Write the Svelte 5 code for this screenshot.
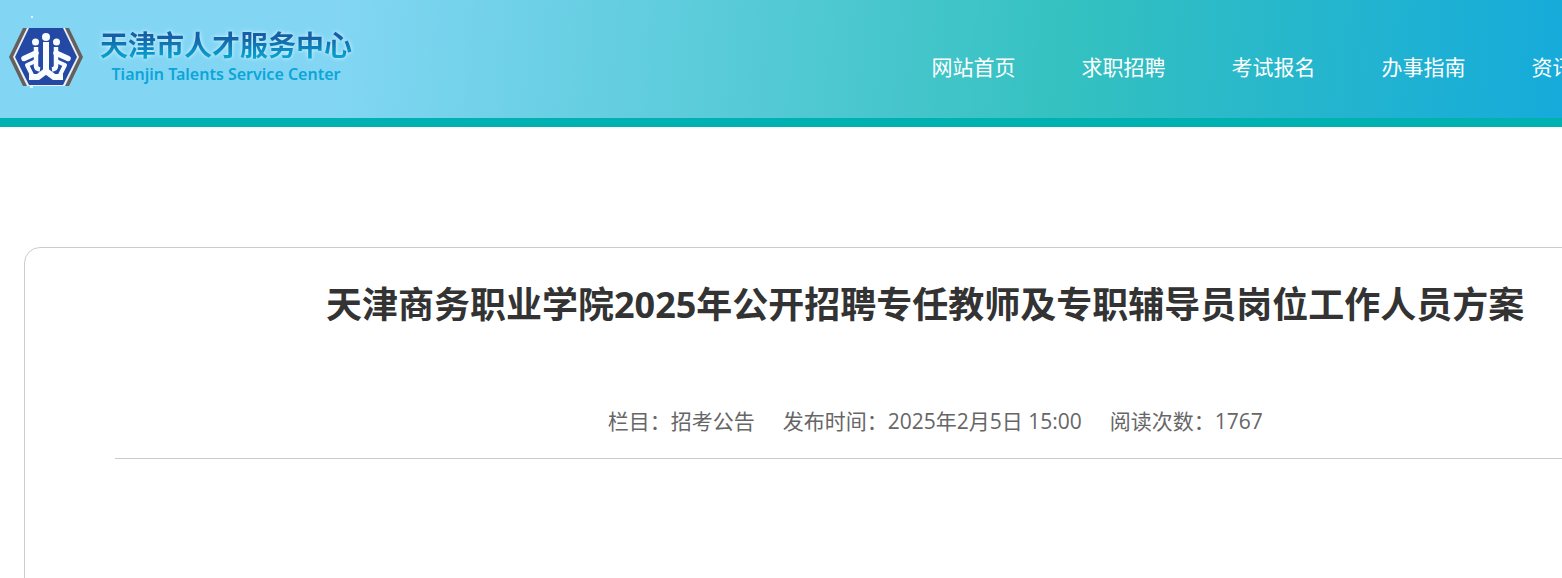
<script lang="ts">
	interface NavItem {
		label: string;
		href: string;
	}

	const navItems: NavItem[] = [
		{ label: '网站首页', href: '#home' },
		{ label: '求职招聘', href: '#jobs' },
		{ label: '考试报名', href: '#exams' },
		{ label: '办事指南', href: '#guide' },
		{ label: '资讯中心', href: '#news' }
	];

	const article = {
		title: '天津商务职业学院2025年公开招聘专任教师及专职辅导员岗位工作人员方案',
		meta: [
			{ label: '栏目', value: '招考公告' },
			{ label: '发布时间', value: '2025年2月5日 15:00' },
			{ label: '阅读次数', value: '1767' }
		]
	};
</script>

<div class="page">
	<header class="site-header">
		<a class="brand" href="#home">
			<svg class="brand-mark" viewBox="0 0 76 60" aria-hidden="true">
				<path d="M15 0H61L75 29L61 58H15L1 29Z" fill="#655f5e" />
				<path d="M19 0H57L71 29L57 58H19L5 29Z" fill="#e9f1f6" />
				<path d="M21 0H55L69 29L55 57H21L7 29Z" fill="#2449a5" />
				<path d="M23 -11H25M22 59H25" stroke="#d9f4fd" stroke-width="2" />
				<g fill="#f8fbff">
					<circle cx="38" cy="9" r="4" />
					<circle cx="27.500" cy="14" r="3.500" />
					<circle cx="48.500" cy="14" r="3.500" />
				</g>
				<g fill="none" stroke="#f8fbff" stroke-linejoin="round">
					<path d="M38 14V44" stroke-width="6" />
					<path d="M28 19V38Q28 41 32 41.500M48 19V38Q48 41 44 41.500" stroke-width="4.500" />
					<path d="M28 25L16 30.500M48 25L60 30.500" stroke-width="5.500" stroke-linecap="round" />
					<path d="M28 33L19 37L24 47M48 33L57 37L52 47" stroke-width="4" />
					<path d="M21 49H30L38 43L46 49H55" stroke-width="6" />
				</g>
			</svg>
			<span class="brand-text">
				<span class="brand-name">天津市人才服务中心</span>
				<span class="brand-sub">Tianjin Talents Service Center</span>
			</span>
		</a>
		<nav class="nav">
			{#each navItems as item}
				<a class="nav-link" href={item.href}>{item.label}</a>
			{/each}
		</nav>
	</header>

	<main class="article">
		<h1 class="article-title">{article.title}</h1>
		<div class="article-meta">
			{#each article.meta as item}
				<span>{item.label}：{item.value}</span>
			{/each}
		</div>
	</main>
</div>

<style>
	:global(body) {
		background: #fff;
		font-family: 'Open Sans', 'Noto Sans CJK SC', sans-serif;
		overflow: hidden;
	}

	.page {
		width: 120%;
		color: #333;
	}

	.site-header {
		display: flex;
		align-items: center;
		justify-content: space-between;
		box-sizing: border-box;
		height: 127px;
		padding: 0 226px 0 8px;
		border-bottom: 9px solid #00b1b1;
		background: linear-gradient(95deg, #82d6f4 18%, #34c1c0 57%, #15aadb 84%);
	}

	.brand {
		display: flex;
		align-items: center;
		gap: 16px;
		padding-bottom: 2px;
		text-decoration: none;
	}

	.brand-mark {
		width: 76px;
		height: 60px;
		overflow: visible;
	}

	.brand-text {
		display: flex;
		flex-direction: column;
		align-items: center;
	}

	.brand-name {
		font-size: 28px;
		font-weight: 700;
		line-height: 32px;
		color: transparent;
		background: linear-gradient(#145fa5 25%, #08a0cf 85%);
		background-clip: text;
		filter: drop-shadow(0 0 2px #e4f8ff);
	}

	.brand-sub {
		font-family: 'Noto Sans', sans-serif;
		font-size: 16px;
		font-weight: 600;
		line-height: 26px;
		color: #0ba5d8;
	}

	.nav {
		display: flex;
		padding-top: 16px;
	}

	.nav-link {
		padding: 0 33px;
		font-size: 21px;
		line-height: 32px;
		color: #fff;
		text-decoration: none;
		white-space: nowrap;
	}

	.article {
		margin: 120px 24px 0;
		padding: 33px 90px 240px;
		border: 1px solid #ccc;
		border-radius: 16px;
	}

	.article-title {
		margin: 0;
		padding-right: 24px;
		font-size: 36px;
		font-weight: 700;
		line-height: 48px;
		text-align: center;
		white-space: nowrap;
	}

	.article-meta {
		display: flex;
		justify-content: center;
		gap: 28px;
		margin-top: 75px;
		padding: 0 4px 20px 0;
		border-bottom: 1px solid #ccc;
		font-size: 21px;
		line-height: 34px;
		color: #666;
	}
</style>
